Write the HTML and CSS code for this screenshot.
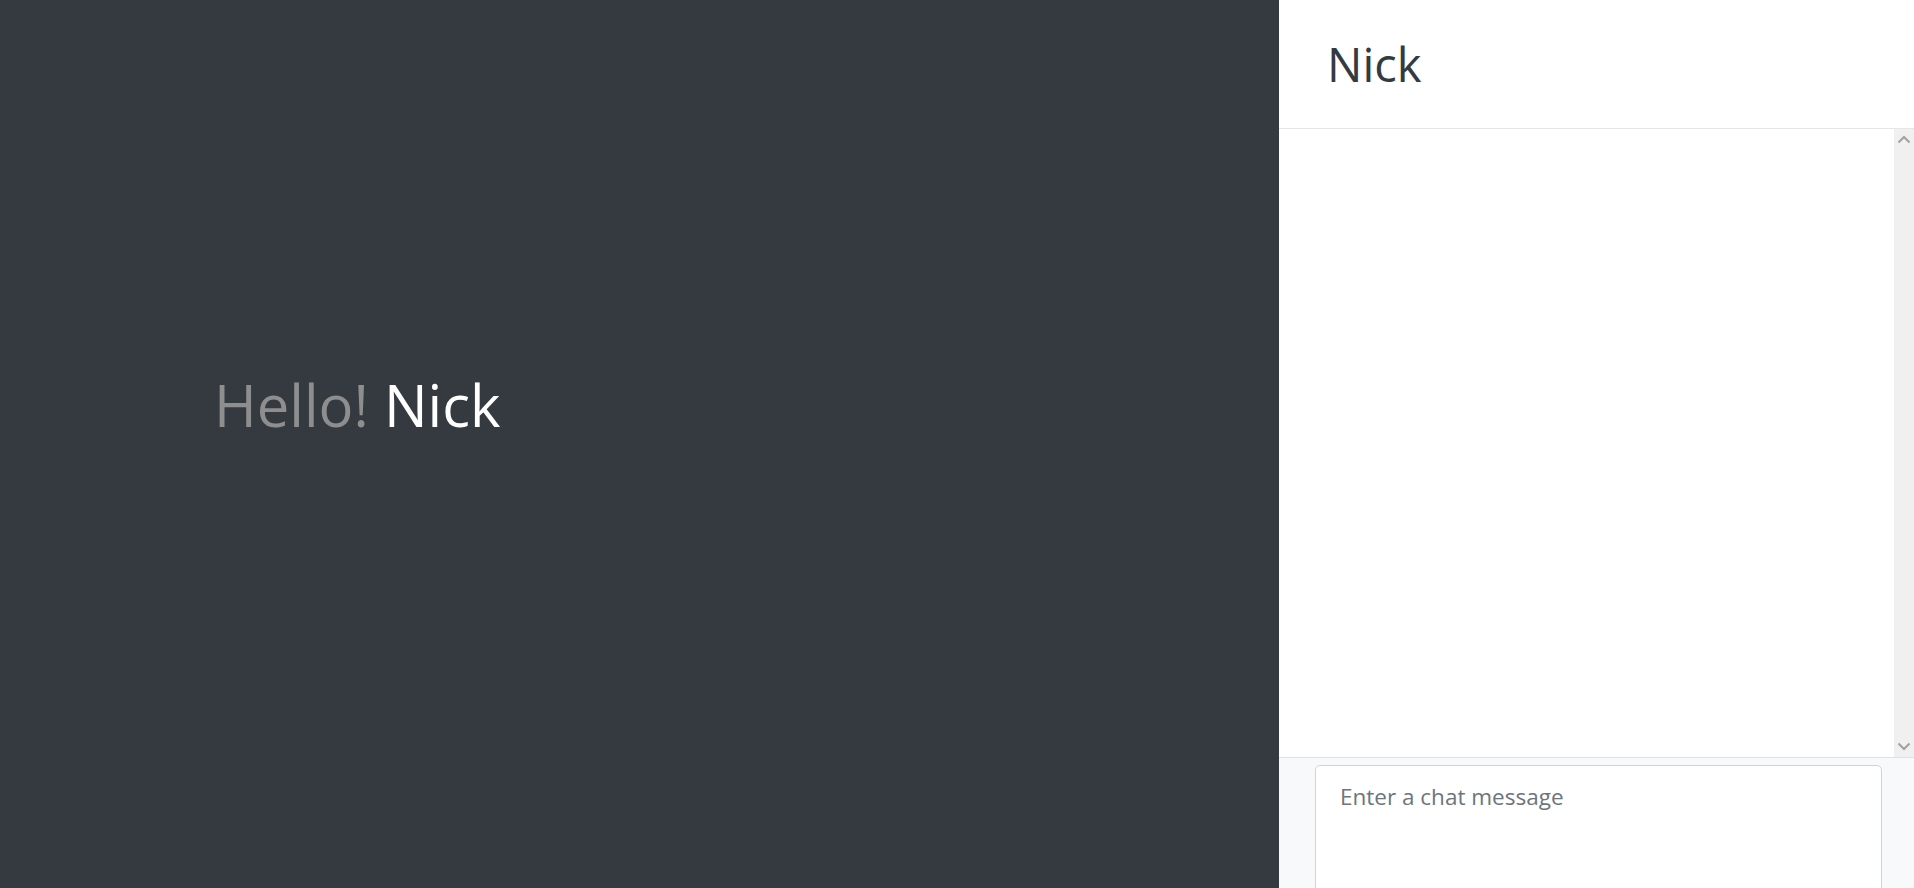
FILE: index.html
```html
<!DOCTYPE html>
<html lang="en">
<head>
<meta charset="utf-8">
<title>Chat</title>
<link rel="stylesheet" href="styles.css">
</head>
<body>
<div class="app">
  <main class="stage">
    <h1 class="greeting"><span class="hello">Hello!</span> <span class="name">Nick</span></h1>
  </main>
  <aside class="chat">
    <header class="chat-header"><h2 class="chat-title">Nick</h2></header>
    <div class="chat-body">
      <div class="messages"></div>
      <div class="scrollbar">
        <svg class="sb-arrow" width="20" height="20" viewBox="0 0 20 20"><path d="M4.5 13.5 L10 8 L15.5 13.5" fill="none" stroke="#a3a3a3" stroke-width="2.2"/></svg>
        <div class="sb-track"></div>
        <svg class="sb-arrow" width="20" height="20" viewBox="0 0 20 20"><path d="M4.5 6.5 L10 12 L15.5 6.5" fill="none" stroke="#a3a3a3" stroke-width="2.2"/></svg>
      </div>
    </div>
    <footer class="chat-footer">
      <textarea class="chat-input" placeholder="Enter a chat message"></textarea>
    </footer>
  </aside>
</div>
</body>
</html>
```
FILE: styles.css
```css
* { box-sizing: border-box; }
html, body { margin: 0; padding: 0; height: 100%; }
body {
  font-family: "Open Sans", "Noto Sans", sans-serif;
  overflow: hidden;
}
.app {
  display: flex;
  height: 888px;
}
.stage {
  width: 1279px;
  background: #343a40;
  display: flex;
  align-items: center;
  padding: 0 0 78px 214px;
}
.greeting {
  margin: 0;
  font-weight: 400;
  font-size: 58px;
  line-height: 1.2;
}
.hello { color: #8e8e8e; }
.name { color: #ffffff; }
.chat {
  flex: 1;
  display: flex;
  flex-direction: column;
  background: #fff;
  min-width: 0;
}
.chat-header {
  height: 129px;
  border-bottom: 1px solid #e6e6e6;
  display: flex;
  align-items: center;
  padding-left: 48px;
}
.chat-title {
  margin: 0;
  font-weight: 400;
  font-size: 47px;
  color: #343a40;
  line-height: 1.2;
}
.chat-body {
  height: 628px;
  display: flex;
}
.messages { flex: 1; }
.scrollbar {
  width: 20px;
  background: #f0f0f0;
  display: flex;
  flex-direction: column;
}
.sb-arrow { display: block; }
.sb-track { flex: 1; }
.chat-footer {
  flex: 1;
  background: #f8f9fa;
  border-top: 1px solid #dee2e6;
  padding: 7px 32px 0 36px;
  overflow: hidden;
}
.chat-input {
  display: block;
  width: 100%;
  height: 140px;
  resize: none;
  border: 1px solid #ced4da;
  border-radius: 5px;
  background: #fff;
  padding: 14px 24px;
  font-family: "Open Sans", "Noto Sans", sans-serif;
  font-size: 22.5px;
  line-height: 1.5;
  color: #495057;
}
.chat-input::placeholder { color: #6c757d; }
```
